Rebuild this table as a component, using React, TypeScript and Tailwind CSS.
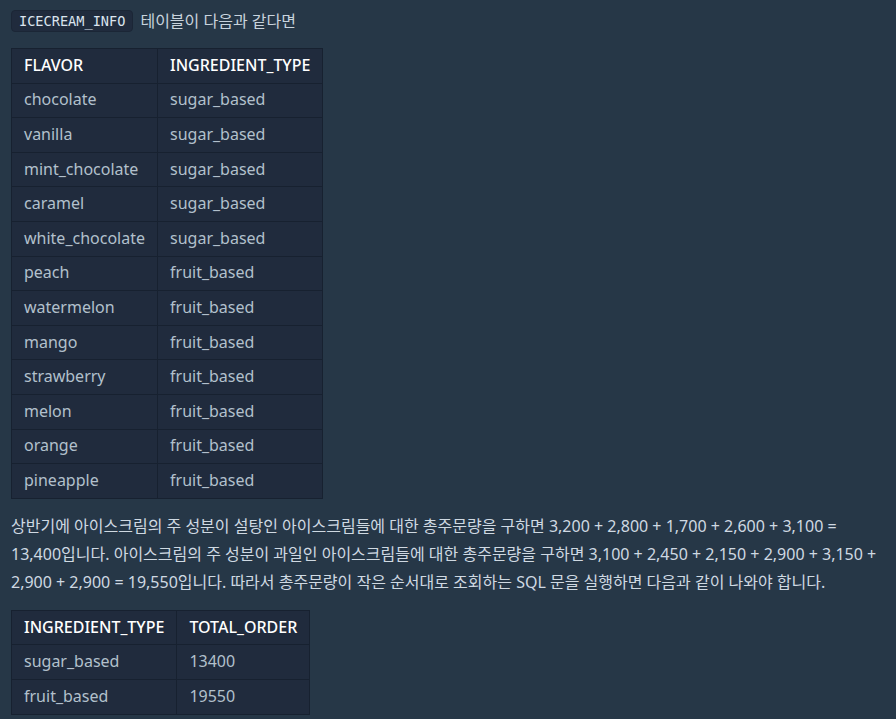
const flavors: [string, string][] = [
  ["chocolate", "sugar_based"],
  ["vanilla", "sugar_based"],
  ["mint_chocolate", "sugar_based"],
  ["caramel", "sugar_based"],
  ["white_chocolate", "sugar_based"],
  ["peach", "fruit_based"],
  ["watermelon", "fruit_based"],
  ["mango", "fruit_based"],
  ["strawberry", "fruit_based"],
  ["melon", "fruit_based"],
  ["orange", "fruit_based"],
  ["pineapple", "fruit_based"],
];

const totals: [string, string][] = [
  ["sugar_based", "13400"],
  ["fruit_based", "19550"],
];

function DataTable({ head, rows }: { head: string[]; rows: [string, string][] }) {
  return (
    <table className="border-collapse bg-[#202b3d] text-[16px] leading-[24px]">
      <thead>
        <tr>
          {head.map((h) => (
            <th
              key={h}
              className="h-[34.6px] border border-[#172130] px-3 pb-[2px] text-left font-medium text-white"
            >
              {h}
            </th>
          ))}
        </tr>
      </thead>
      <tbody>
        {rows.map((r) => (
          <tr key={r[0]}>
            {r.map((c, i) => (
              <td
                key={i}
                className="h-[34.6px] border border-[#172130] px-3 pb-[2px] text-[#b2c0cc]"
              >
                {c}
              </td>
            ))}
          </tr>
        ))}
      </tbody>
    </table>
  );
}

export default function App() {
  return (
    <div className="min-h-[719px] bg-[#263747] px-[11px] pt-[10px] font-['Noto_Sans','Noto_Sans_CJK_KR',sans-serif] text-[#d7e2eb]">
      <p className="flex items-center gap-[7px]">
        <code className="rounded-[4px] border border-[#1b2636] bg-[#202b3d] px-[7px] font-['DejaVu_Sans_Mono',monospace] text-[13.6px] leading-[20px] text-[#dbe4ee]">
          ICECREAM_INFO
        </code>
        <span className="text-[16px] leading-[22px] text-[#c8d3dd]">테이블이 다음과 같다면</span>
      </p>
      <div className="mt-[16px]">
        <DataTable head={["FLAVOR", "INGREDIENT_TYPE"]} rows={flavors} />
      </div>
      <p className="mt-[13px] break-keep text-[16px] leading-[28px] text-[#cfd9e2]">
        상반기에 아이스크림의 주 성분이 설탕인 아이스크림들에 대한 총주문량을 구하면 3,200 + 2,800 + 1,700 + 2,600 + 3,100 =
        13,400입니다. 아이스크림의 주 성분이 과일인 아이스크림들에 대한 총주문량을 구하면 3,100 + 2,450 + 2,150 + 2,900 + 3,150 +
        2,900 + 2,900 = 19,550입니다. 따라서 총주문량이 작은 순서대로 조회하는 SQL 문을 실행하면 다음과 같이 나와야 합니다.
      </p>
      <div className="mt-[14px]">
        <DataTable head={["INGREDIENT_TYPE", "TOTAL_ORDER"]} rows={totals} />
      </div>
    </div>
  );
}
